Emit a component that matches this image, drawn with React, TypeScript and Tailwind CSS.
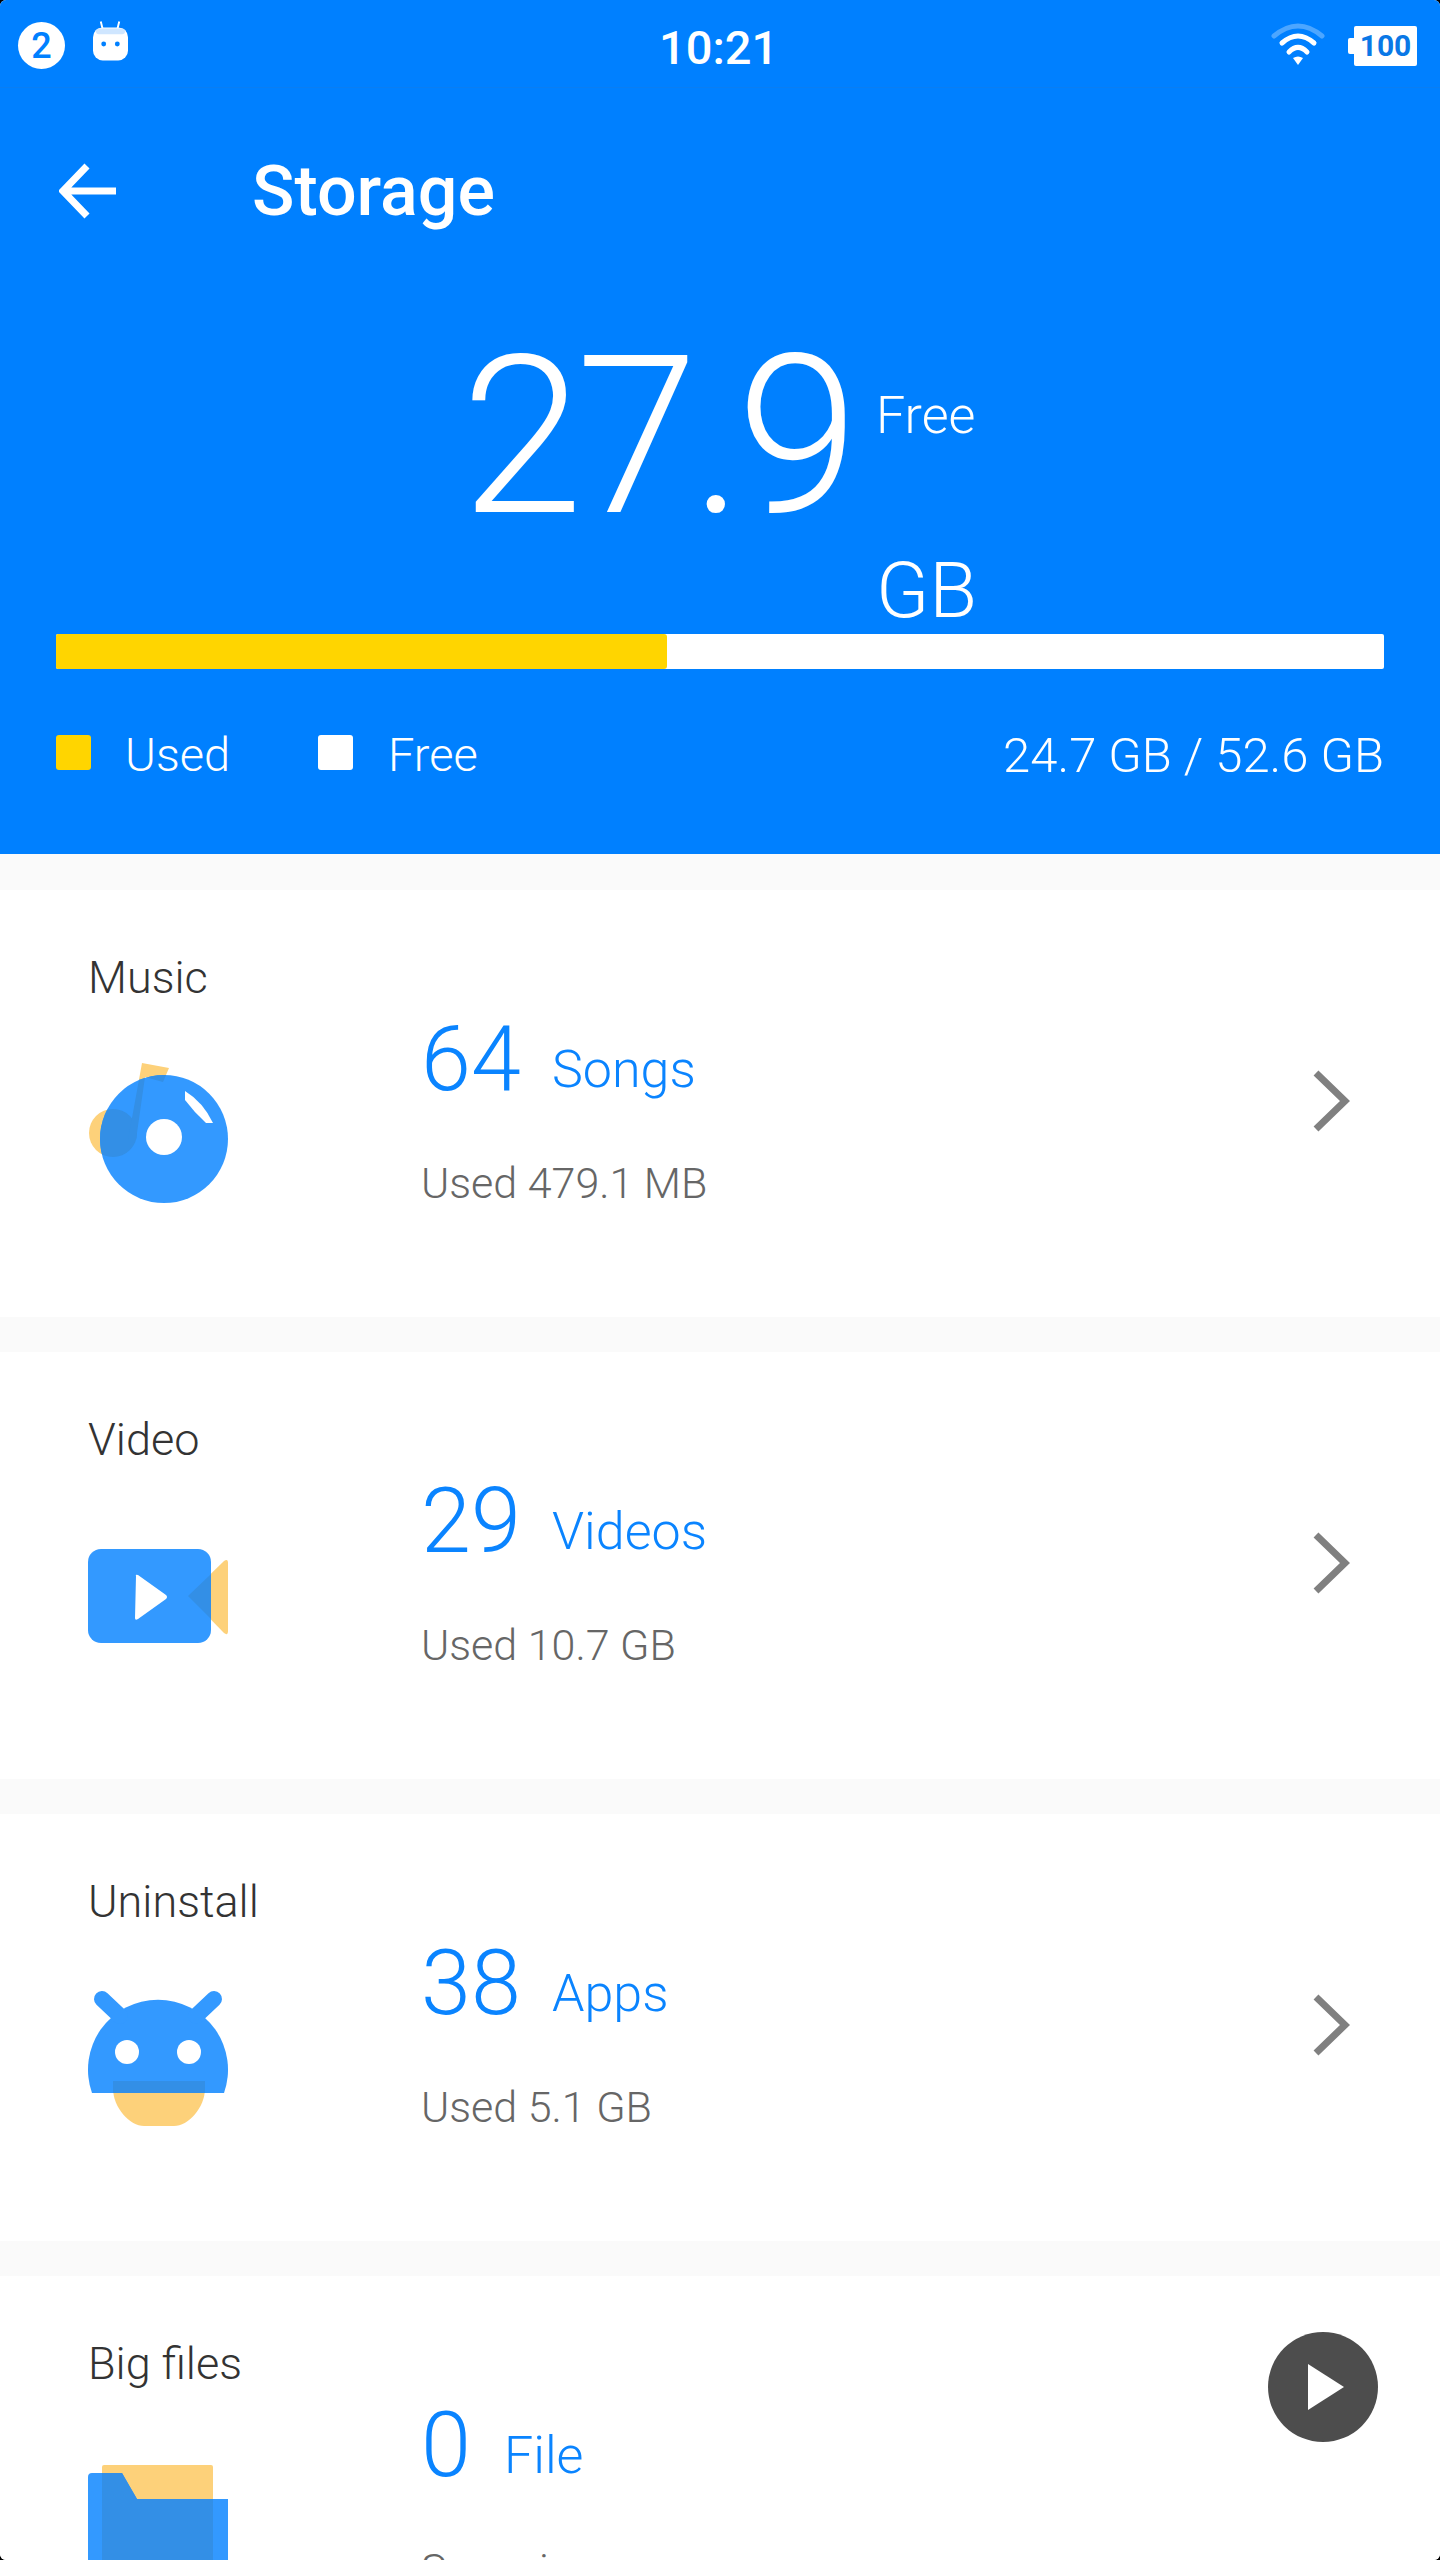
const FONT = "font-['Roboto','Liberation_Sans',sans-serif]";

function MusicIcon() {
  return (
    <svg width="140" height="150" viewBox="0 0 140 150" className="block">
      <defs>
        <clipPath id="disc"><circle cx="76" cy="79" r="64" /></clipPath>
      </defs>
      <g fill="#fdd17a">
        <circle cx="25" cy="73" r="24" />
        <path d="M54 3 L81 8 L75 22 L57 17 L48 80 L40 80 Z" />
      </g>
      <circle cx="76" cy="79" r="64" fill="#3399ff" />
      <g fill="#338fe6" clipPath="url(#disc)">
        <circle cx="25" cy="73" r="24" />
        <path d="M54 3 L81 8 L75 22 L57 17 L48 80 L40 80 Z" />
      </g>
      <circle cx="76" cy="77" r="18" fill="#fff" />
      <path d="M97 31 Q115 42 125 63 L118 63 Q106 52 97 40 Z" fill="#fff" />
    </svg>
  );
}

function VideoIcon() {
  return (
    <svg width="140" height="150" viewBox="0 0 140 150" className="block">
      <path d="M100 74 L136 39 Q140 36 140 41 L140 109 Q140 114 136 111 Z" fill="#fdd17a" />
      <rect x="0" y="27" width="123" height="94" rx="13" fill="#3399ff" />
      <path d="M100 74 L123 52 L123 97 Z" fill="#338fe6" />
      <path d="M48 54 Q47 52 50 53 L78 73 Q80 75 78 77 L50 97 Q47 99 47 96 Z" fill="#fff" />
    </svg>
  );
}

function AndroidIcon() {
  return (
    <svg width="140" height="150" viewBox="0 0 140 150" className="block">
      <path d="M25 97 H117 V104 C117 124 100 142 86 142 H56 C42 142 25 124 25 104 Z" fill="#fdd17a" />
      <path d="M4 109 A70 70 0 1 1 136 109 Z" fill="#3399ff" />
      <path d="M14 15 L32 32 M126 15 L108 32" stroke="#3399ff" strokeWidth="16" strokeLinecap="round" />
      <rect x="25" y="97" width="92" height="12" fill="#338fe6" />
      <circle cx="39" cy="68" r="12" fill="#fff" />
      <circle cx="101" cy="68" r="12" fill="#fff" />
    </svg>
  );
}

function FolderIcon() {
  return (
    <svg width="140" height="150" viewBox="0 0 140 150" className="block">
      <path d="M14 21 Q14 19 16 19 H123 Q125 19 125 21 V60 H14 Z" fill="#fdd17a" />
      <path d="M0 31 Q0 27 4 27 H34 L49 53 H140 V150 H0 Z" fill="#3399ff" />
      <path d="M14 27 H34 L49 53 H125 V150 H14 Z" fill="#338fe6" />
    </svg>
  );
}

function Chevron() {
  return (
    <svg width="38" height="62" viewBox="0 0 38 62" className="block">
      <path d="M4 3 L33 31 L4 59" fill="none" stroke="#808080" strokeWidth="7" />
    </svg>
  );
}

function Card(props: { label: string; num: string; unit: string; sub: string; icon: React.ReactNode; chevron?: boolean; numW: string }) {
  return (
    <section className="flex h-[427px] shrink-0 bg-white pl-[88px] pr-[90px]">
      <div className="w-[333px] shrink-0">
        <div className="h-[170px] pt-[62px] text-[45px] leading-[52px] font-light text-[#333333]">{props.label}</div>
        {props.icon}
      </div>
      <div className="flex-1 pt-[130px]">
        <div className="flex h-[80px] items-end text-[#0a84ff]">
          <span className={`${props.numW} text-[90px] leading-[80px] font-light`}>{props.num}</span>
          <span className="text-[52px] leading-[60px] font-light">{props.unit}</span>
        </div>
        <div className="mt-[58px] text-[43px] leading-[50px] font-light text-[#666666]">{props.sub}</div>
      </div>
      {props.chevron && (
        <div className="flex items-center pb-[6px]">
          <Chevron />
        </div>
      )}
    </section>
  );
}

export default function App() {
  return (
    <div className="h-[2560px] w-[1440px] overflow-hidden bg-black">
      <div className={`${FONT} relative h-[2560px] overflow-hidden rounded-[6px] bg-[#fafafa]`}>
        <header className="h-[854px] bg-[#0080ff] text-white">
          <div className="relative flex h-[88px] items-center justify-between border-b border-[#0a7ef2] pl-[18px] pr-[23px]">
            <div className="flex items-center gap-[28px]">
              <div className="mt-[4px] flex h-[47px] w-[47px] items-center justify-center rounded-full bg-white text-[36px] leading-none font-medium text-[#0080ff]">2</div>
              <svg width="35" height="42" viewBox="0 0 36 42" className="mb-[4px] block">
                <path d="M8 0 L10 8 M27 0 L25 8" stroke="#fff" strokeWidth="2" />
                <rect x="0" y="6" width="36" height="34" rx="10" fill="#fff" />
                <rect x="3" y="7" width="30" height="6" rx="3" fill="#cfe6ff" />
                <circle cx="11" cy="23" r="2.5" fill="#0080ff" />
                <circle cx="25" cy="23" r="2.5" fill="#0080ff" />
              </svg>
            </div>
            <div className="absolute left-[659px] top-[21px] text-[47px] leading-[54px] font-medium">10:21</div>
            <div className="flex items-center gap-[29px]">
              <svg width="54" height="44" viewBox="0 0 54 44" className="block">
                <path d="M3 14 Q27 -6 51 14" fill="none" stroke="#4da6ff" strokeWidth="5" strokeLinecap="round" />
                <path d="M11 21 Q27 7 43 21" fill="none" stroke="#fff" strokeWidth="5" strokeLinecap="round" />
                <path d="M18 30 Q27 21 36 30" fill="none" stroke="#fff" strokeWidth="5" strokeLinecap="round" />
                <path d="M22 36 Q27 33 32 36 L27 43 Z" fill="#fff" />
              </svg>
              <div className="relative mt-[4px] flex h-[40px] w-[63px] items-center justify-center rounded-[2px] bg-white text-[30px] leading-none font-bold text-[#0a78e6]">
                <span className="absolute left-[-6px] top-[12px] h-[16px] w-[7px] rounded-l-[2px] bg-white" />
                100
              </div>
            </div>
          </div>
          <div className="flex h-[206px] items-center pl-[59px]">
            <svg width="58" height="56" viewBox="0 0 58 56" className="block">
              <path d="M28 3 L4 28 L28 53 M4 28 H57" fill="none" stroke="#fff" strokeWidth="7" />
            </svg>
            <h1 className="ml-[135px] text-[70px] leading-[80px] font-medium">Storage</h1>
          </div>
          <div className="flex h-[340px] pl-[461px]">
            <div className="w-[415px] pt-[13px] text-[220px] leading-[260px] font-light tracking-[-7px]">27.9</div>
            <div className="pt-[92px] font-light">
              <div className="h-[60px] text-[52px] leading-[60px]">Free</div>
              <div className="mt-[110px] text-[78px] leading-[70px]">GB</div>
            </div>
          </div>
          <div className="mx-[56px] flex h-[35px] overflow-hidden rounded-[2px] bg-white">
            <div className="w-[611px] rounded-r-[3px] bg-[#ffd500]" />
          </div>
          <div className="mx-[56px] mt-[66px] flex h-[35px] items-center text-[47px] font-light">
            <span className="h-[35px] w-[35px] rounded-[3px] bg-[#ffd500]" />
            <span className="ml-[34px] mt-[6px] w-[193px]">Used</span>
            <span className="h-[35px] w-[35px] rounded-[3px] bg-white" />
            <span className="ml-[35px] mt-[6px]">Free</span>
            <span className="ml-auto mt-[6px] text-[49px]">24.7 GB / 52.6 GB</span>
          </div>
        </header>
        <main className="flex flex-col gap-[35px] pt-[36px]">
          <Card label="Music" num="64" unit="Songs" sub="Used 479.1 MB" numW="w-[131px]" icon={<MusicIcon />} chevron />
          <Card label="Video" num="29" unit="Videos" sub="Used 10.7 GB" numW="w-[131px]" icon={<VideoIcon />} chevron />
          <Card label="Uninstall" num="38" unit="Apps" sub="Used 5.1 GB" numW="w-[131px]" icon={<AndroidIcon />} chevron />
          <Card label="Big files" num="0" unit="File" sub="Scanning" numW="w-[83px]" icon={<FolderIcon />} />
        </main>
        <button className="absolute left-[1268px] top-[2332px] flex h-[110px] w-[110px] items-center justify-center rounded-full bg-[#4d4d4d]">
          <svg width="36" height="46" viewBox="0 0 36 46" className="ml-[6px] block">
            <path d="M0 0 L36 23 L0 46 Z" fill="#fff" />
          </svg>
        </button>
      </div>
    </div>
  );
}
